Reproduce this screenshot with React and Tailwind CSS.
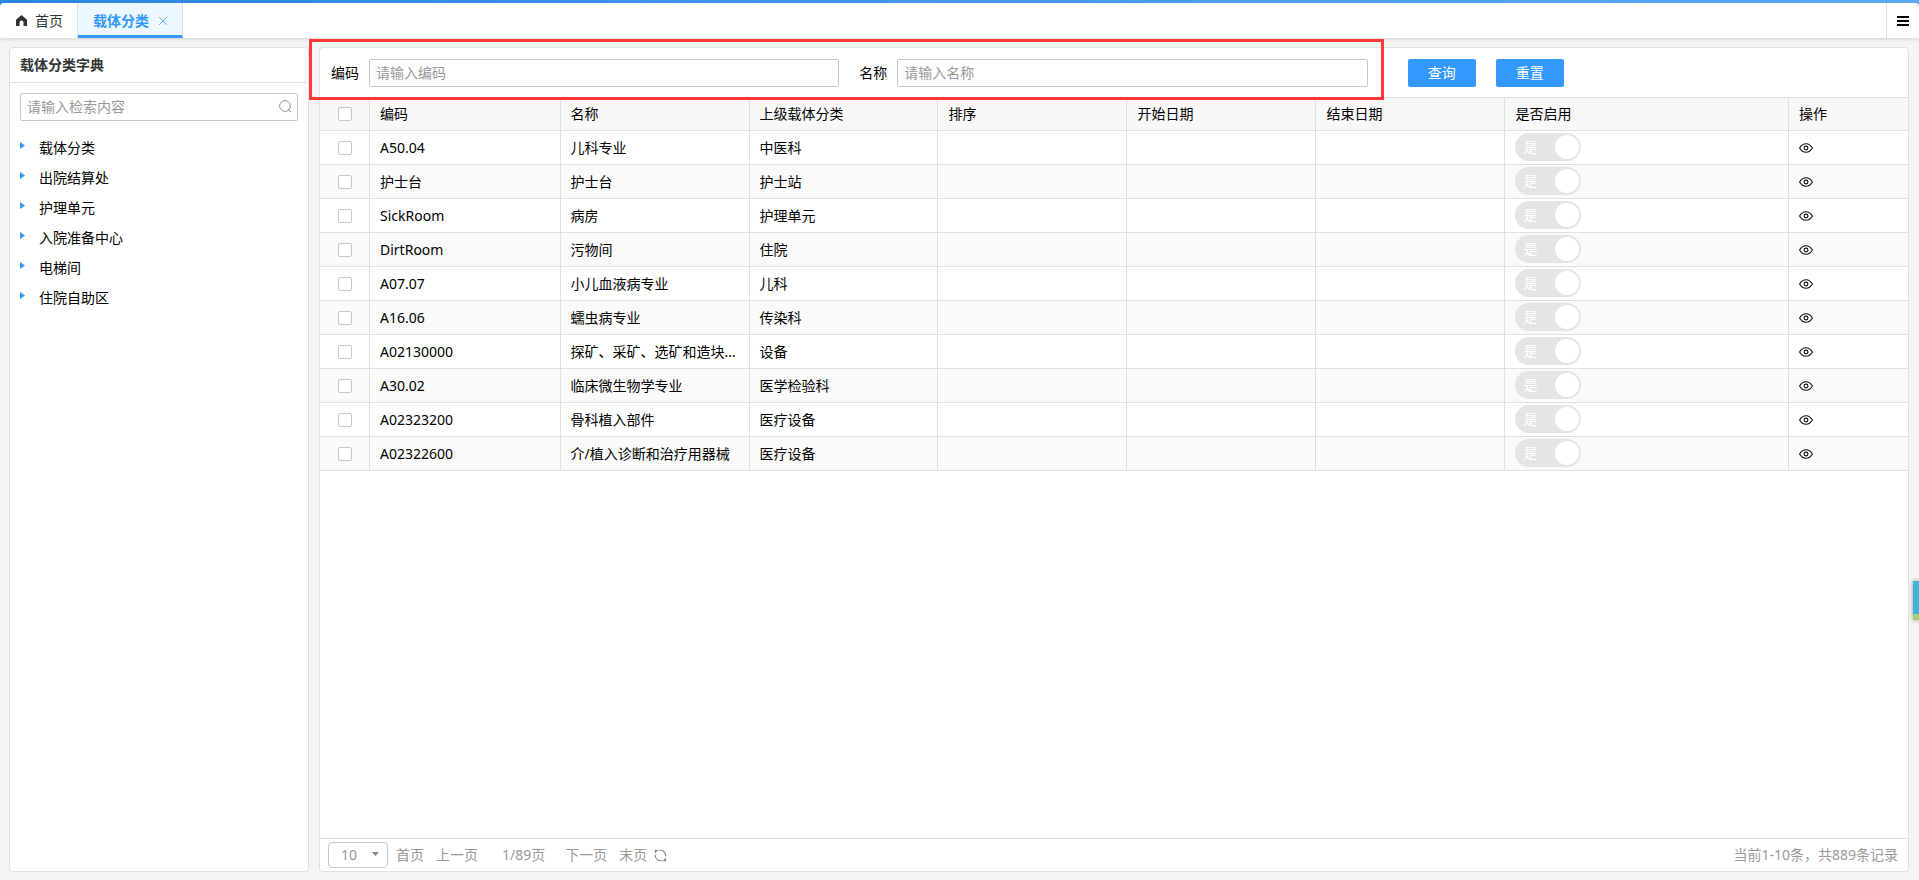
import { useState } from "react";

const treeNodes = [
  "载体分类",
  "出院结算处",
  "护理单元",
  "入院准备中心",
  "电梯间",
  "住院自助区",
];

const rows = [
  { code: "A50.04", name: "儿科专业", parent: "中医科" },
  { code: "护士台", name: "护士台", parent: "护士站" },
  { code: "SickRoom", name: "病房", parent: "护理单元" },
  { code: "DirtRoom", name: "污物间", parent: "住院" },
  { code: "A07.07", name: "小儿血液病专业", parent: "儿科" },
  { code: "A16.06", name: "蠕虫病专业", parent: "传染科" },
  { code: "A02130000", name: "探矿、采矿、选矿和造块...", parent: "设备" },
  { code: "A30.02", name: "临床微生物学专业", parent: "医学检验科" },
  { code: "A02323200", name: "骨科植入部件", parent: "医疗设备" },
  { code: "A02322600", name: "介/植入诊断和治疗用器械", parent: "医疗设备" },
];

const columns = [
  { title: "编码", width: "w-[12%]" },
  { title: "名称", width: "w-[11.9%]" },
  { title: "上级载体分类", width: "w-[11.9%]" },
  { title: "排序", width: "w-[11.9%]" },
  { title: "开始日期", width: "w-[11.9%]" },
  { title: "结束日期", width: "w-[11.9%]" },
  { title: "是否启用", width: "" },
];

const cell = "border-r border-b border-[#e0e0e0] px-2.5 truncate";
const inputStyle =
  "h-7 w-full min-w-0 rounded-xs border border-[#c8c8c8] bg-white px-1.5 pb-0.5 placeholder:text-[#999] outline-none focus:border-[#3399ff]";

const HomeIcon = () => (
  <svg className="h-[11px] w-[11px]" viewBox="0 0 11 11" fill="#333">
    <path d="M5.5 0 11 4.800V11H7.500V7.500a2 2 0 0 0-4 0V11H0V4.800z" />
  </svg>
);

const CloseIcon = () => (
  <svg className="h-2 w-2" viewBox="0 0 8 8" fill="none" stroke="#6bb2f7">
    <path d="M0 0l8 8M8 0L0 8" />
  </svg>
);

const MenuIcon = () => (
  <svg className="h-2.5 w-3" viewBox="0 0 12 10" fill="#000">
    <path d="M0 0h12v2H0zM0 4h12v2H0zM0 8h12v2H0z" />
  </svg>
);

const SearchIcon = () => (
  <svg className="h-[13px] w-[13px]" viewBox="0 0 13 13" fill="none" stroke="#999">
    <circle cx="6" cy="6" r="5.4" />
    <path d="M9.4 9.8l2.9 2.4" />
  </svg>
);

const EyeIcon = () => (
  <svg className="h-2.5 w-3.5" viewBox="0 0 14 10" fill="none" stroke="#111" strokeWidth="1.1">
    <path d="M.6 5C2.2 2.2 4.4.7 7 .7S11.8 2.2 13.4 5C11.8 7.8 9.6 9.3 7 9.3S2.2 7.8.6 5z" />
    <circle cx="7" cy="5" r="1.9" />
  </svg>
);

const RefreshIcon = () => (
  <svg className="h-[13px] w-[13px]" viewBox="0 0 13 13" fill="none" stroke="#888" strokeWidth="1.1">
    <path d="M4.6 1.7A5.2 5.2 0 0 1 11.7 6.5v.8M8.4 11.3A5.2 5.2 0 0 1 1.3 6.500v-.8" />
    <path d="M.6.8h3.800L1.200 4.600zM12.400 12.200H8.600l3.200-3.800z" fill="#888" stroke="none" />
  </svg>
);

const CheckBox = ({ label }) => (
  <input
    type="checkbox"
    aria-label={label}
    className="block mx-auto size-3.5 appearance-none rounded-xs border border-[#c8c8c8] bg-white checked:bg-[#3399ff]"
  />
);

const Toggle = ({ label }) => (
  <label className="flex h-7 w-[66px] items-center justify-between rounded-full bg-[#e5e5e5] pl-2 pr-0.5 text-white">
    <input type="checkbox" aria-label={label} defaultChecked disabled className="sr-only" />
    <span>是</span>
    <span className="size-6 rounded-full bg-white" />
  </label>
);

const TopBar = () => (
  <header className="relative shrink-0 bg-linear-to-r from-[#2b85e0] to-[#5aaafa] pt-[3px] shadow-[0_1px_4px_rgba(0,0,0,0.15)]">
    <nav className="flex h-[35px] items-stretch rounded-t-sm bg-white">
      <a
        href="#home"
        className="flex items-center gap-2 border-r border-[#e0e0e0] pr-3.5 pl-4 text-[#333]"
      >
        <HomeIcon />
        首页
      </a>
      <div className="flex items-center gap-2.5 border-r border-b-3 border-r-[#e0e0e0] border-b-[#3399ff] bg-[#ecf7ff] px-[15px] pt-[3px]">
        <a href="#carrier" className="font-bold text-[#3399ff]">
          载体分类
        </a>
        <button aria-label="关闭" className="cursor-pointer">
          <CloseIcon />
        </button>
      </div>
      <button
        aria-label="菜单"
        className="ml-auto flex cursor-pointer items-center border-l border-[#e0e0e0] px-2.5"
      >
        <MenuIcon />
      </button>
    </nav>
  </header>
);

const Sidebar = () => (
  <aside className="flex w-[300px] shrink-0 flex-col rounded-sm border border-[#e0e0e0] bg-white">
    <h2 className="flex h-[35px] items-center border-b border-[#e0e0e0] px-2.5 font-bold text-[#333]">
      载体分类字典
    </h2>
    <div className="relative mx-2.5 mt-2.5">
      <input aria-label="检索" placeholder="请输入检索内容" className={inputStyle} />
      <button aria-label="搜索" className="absolute top-[7px] right-1.5 cursor-pointer">
        <SearchIcon />
      </button>
    </div>
    <ul className="mt-3 px-2.5">
      {treeNodes.map((node) => (
        <li key={node}>
          <button className="flex h-[30px] w-full cursor-pointer items-center gap-3.5">
            <svg className="mb-1.5 h-[7px] w-[5px]" viewBox="0 0 5 7" fill="#3399ff">
              <path d="M0 0l5 3.5L0 7z" />
            </svg>
            {node}
          </button>
        </li>
      ))}
    </ul>
  </aside>
);

const SearchForm = () => (
  <form className="flex px-[11px] pt-[11px] pb-2.5" onSubmit={(e) => e.preventDefault()}>
    <div className="relative flex w-[66.2%] gap-5">
      <label className="flex flex-1 items-center gap-2.5">
        <span className="shrink-0">编码</span>
        <input placeholder="请输入编码" className={inputStyle} />
      </label>
      <label className="flex flex-1 items-center gap-2.5">
        <span className="shrink-0">名称</span>
        <input placeholder="请输入名称" className={inputStyle} />
      </label>
      <div className="pointer-events-none absolute -top-5 -right-4 -bottom-[13px] -left-[22px] z-10 border-3 border-[#ff3838]" />
    </div>
    <div className="ml-10 flex gap-5">
      <button type="submit" className="h-7 w-[68px] cursor-pointer rounded-xs bg-[#3399ff] text-white">
        查询
      </button>
      <button type="reset" className="h-7 w-[68px] cursor-pointer rounded-xs bg-[#3399ff] text-white">
        重置
      </button>
    </div>
  </form>
);

const DataTable = () => (
  <table className="w-full table-fixed border-separate border-spacing-0 border-t border-[#e0e0e0] text-left">
    <thead>
      <tr className="h-[33px] bg-[#f8f8f8]">
        <th className="w-[50px] border-r border-b border-[#e0e0e0]">
          <CheckBox label="全选" />
        </th>
        {columns.map((col) => (
          <th key={col.title} className={`${cell} ${col.width} font-normal`}>
            {col.title}
          </th>
        ))}
        <th className="w-[119px] border-b border-[#e0e0e0] px-2.5 font-normal">操作</th>
      </tr>
    </thead>
    <tbody>
      {rows.map((row) => (
        <tr key={row.code} className="h-[34px] even:bg-[#fafafa]">
          <td className="border-r border-b border-[#e0e0e0]">
            <CheckBox label={row.code} />
          </td>
          <td className={cell}>{row.code}</td>
          <td className={cell}>{row.name}</td>
          <td className={cell}>{row.parent}</td>
          <td className={cell} />
          <td className={cell} />
          <td className={cell} />
          <td className={`${cell} pb-0.5`}>
            <Toggle label={`${row.name} 是否启用`} />
          </td>
          <td className="border-b border-[#e0e0e0] px-2.5">
            <button aria-label="查看" className="block cursor-pointer">
              <EyeIcon />
            </button>
          </td>
        </tr>
      ))}
    </tbody>
  </table>
);

const Pager = () => {
  const [size, setSize] = useState("10");

  return (
    <footer className="flex h-[33px] items-center border-t border-[#e0e0e0] pr-2.5 pl-2 text-[#999]">
      <div className="relative mr-2">
        <select
          aria-label="每页条数"
          value={size}
          onChange={(e) => setSize(e.target.value)}
          className="block h-[26px] w-[60px] appearance-none rounded-sm border border-[#c8c8c8] bg-white pl-3"
        >
          <option>10</option>
          <option>20</option>
          <option>50</option>
        </select>
        <svg
          className="pointer-events-none absolute top-2.5 right-[9px] h-1 w-[7px]"
          viewBox="0 0 7 4"
          fill="#888"
        >
          <path d="M0 0h7L3.5 4z" />
        </svg>
      </div>
      <button className="mr-3 cursor-pointer">首页</button>
      <button className="cursor-pointer">上一页</button>
      <span className="mr-5 ml-6">1/89页</span>
      <button className="mr-3 cursor-pointer">下一页</button>
      <button className="mr-[7px] cursor-pointer">末页</button>
      <button aria-label="刷新" className="cursor-pointer">
        <RefreshIcon />
      </button>
      <span className="ml-auto">当前1-10条，共889条记录</span>
    </footer>
  );
};

const App = () => {
  return (
    <div className="flex h-screen flex-col bg-[#f4f4f4] font-['Noto_Sans','Noto_Sans_CJK_SC',sans-serif] text-sm text-black">
      <TopBar />
      <main className="flex min-h-0 flex-1 gap-2.5 pt-[9px] pr-2.5 pb-2 pl-[9px]">
        <Sidebar />
        <section className="flex min-w-0 flex-1 flex-col rounded-sm border border-[#e0e0e0] bg-white">
          <SearchForm />
          <div className="flex-1">
            <DataTable />
          </div>
          <Pager />
        </section>
      </main>

      {/* Side drawer handle */}
      <div className="fixed top-[66%] right-0 w-1.5 shadow-[0_0_4px_rgba(0,0,0,0.4)]">
        <div className="h-[33px] bg-[#41b3da]" />
        <div className="h-1.5 bg-[#a0d468]" />
      </div>
    </div>
  );
};

export default App;
